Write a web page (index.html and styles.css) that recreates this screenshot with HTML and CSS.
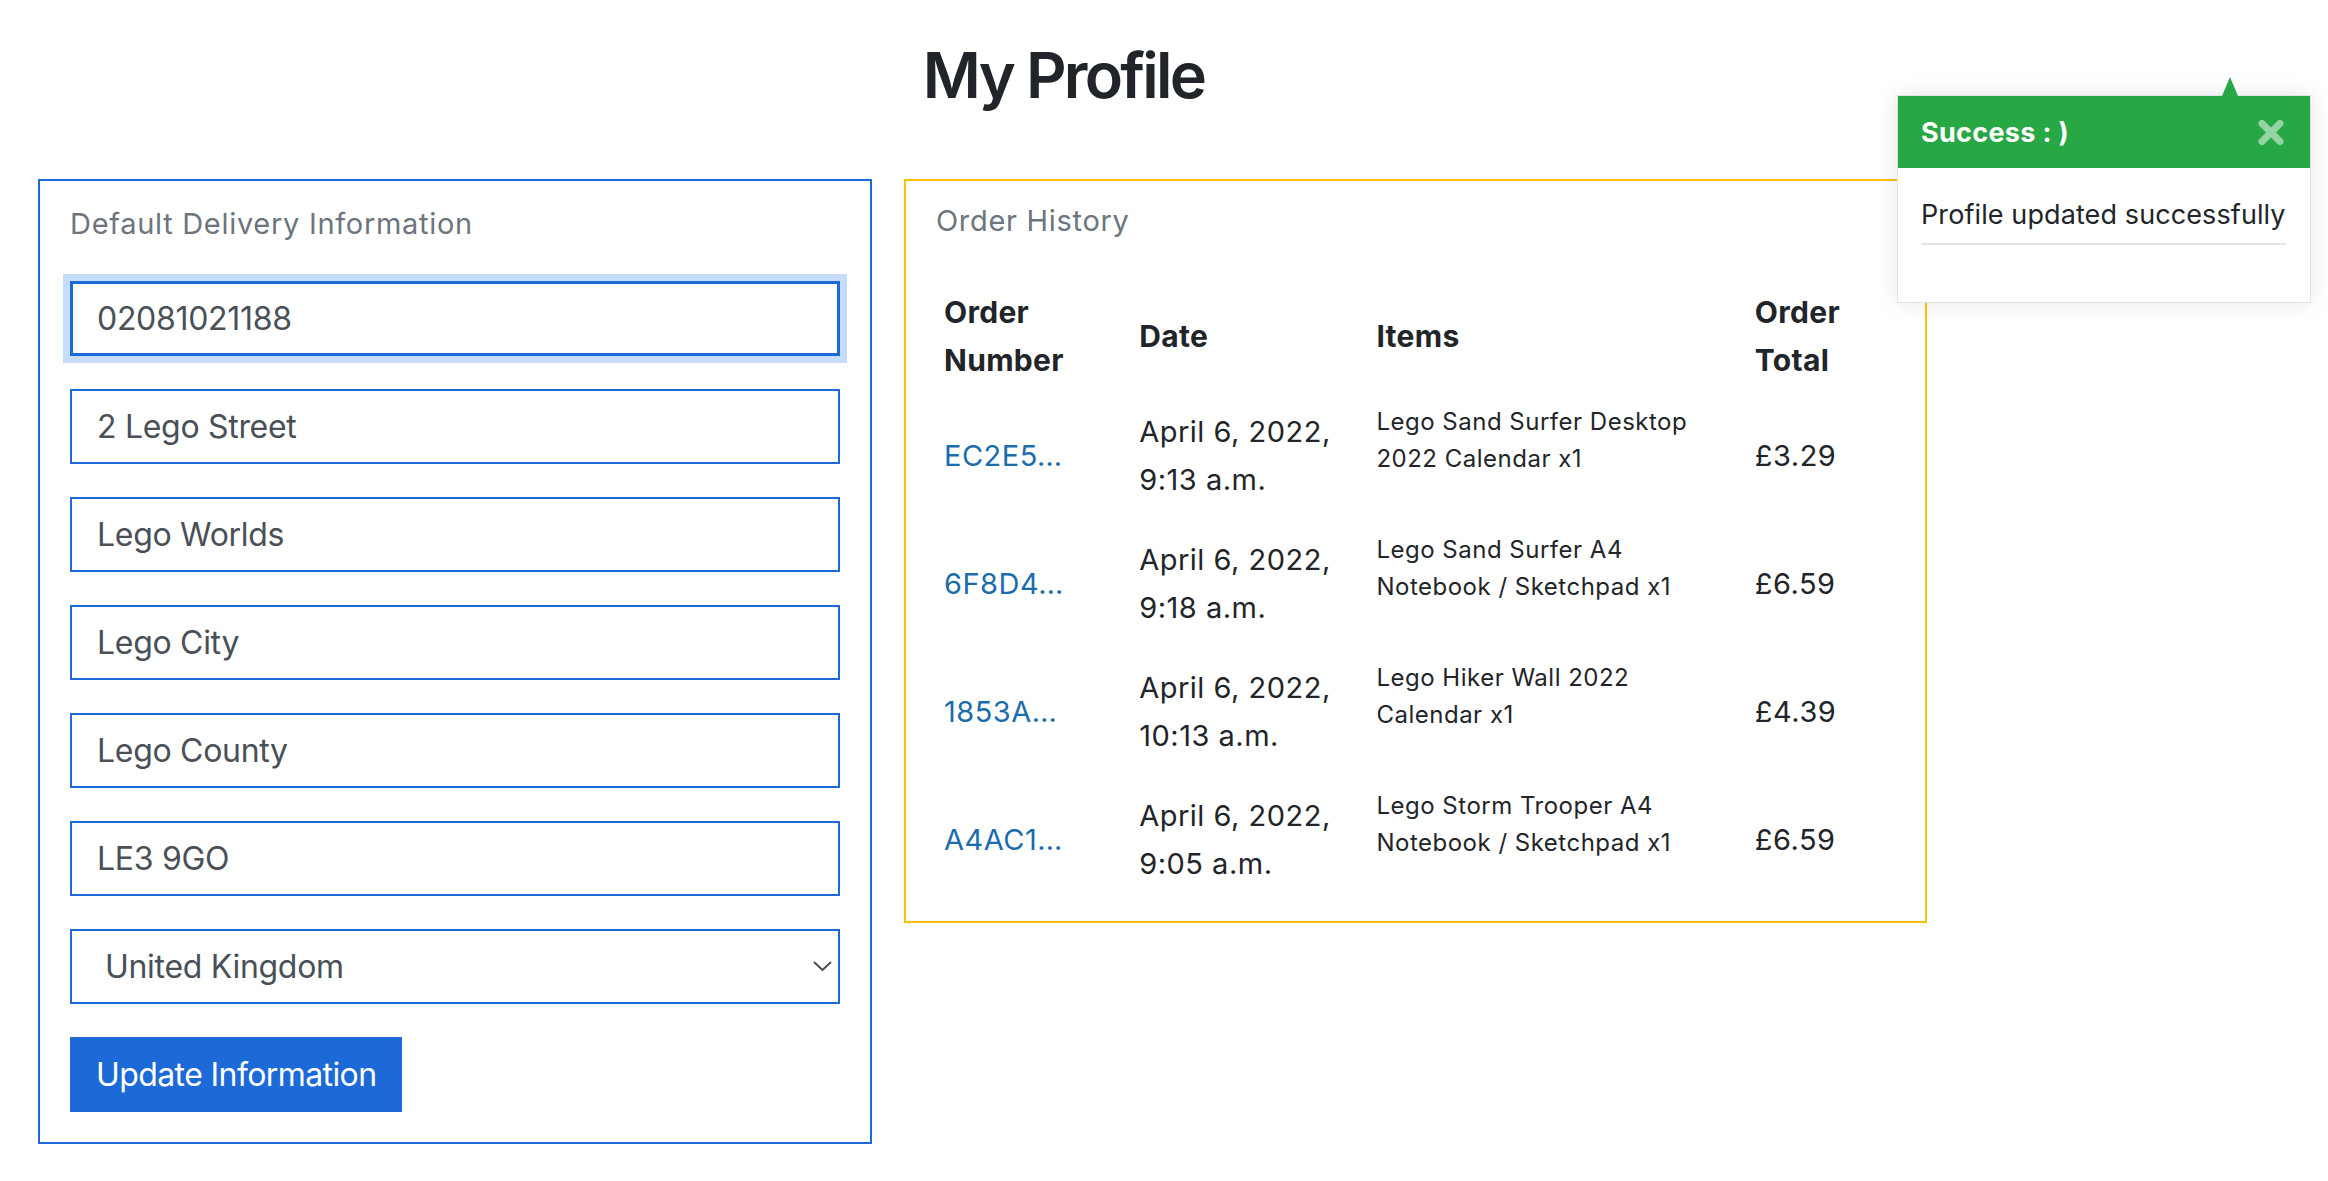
FILE: index.html
```html
<!DOCTYPE html>
<html lang="en">
<head>
<meta charset="utf-8">
<title>My Profile</title>
<link rel="stylesheet" href="styles.css">
</head>
<body>
<main class="page">
  <h1 class="page-title">My Profile</h1>
  <div class="cards">
    <section class="card card-delivery">
      <h2 class="card-title">Default Delivery Information</h2>
      <form class="delivery-form">
        <input class="field is-focused" type="text" value="02081021188">
        <input class="field" type="text" value="2 Lego Street">
        <input class="field" type="text" value="Lego Worlds">
        <input class="field" type="text" value="Lego City">
        <input class="field" type="text" value="Lego County">
        <input class="field" type="text" value="LE3 9GO">
        <div class="select-wrap">
          <select class="field field-select">
            <option selected>United Kingdom</option>
          </select>
          <svg class="chevron" viewBox="0 0 19 10" aria-hidden="true"><path d="M1 1l8.5 8L18 1"/></svg>
        </div>
        <button type="button" class="btn-update">Update Information</button>
      </form>
    </section>
    <section class="card card-orders">
      <h2 class="card-title">Order History</h2>
      <table class="orders">
        <colgroup>
          <col class="col-num">
          <col class="col-date">
          <col class="col-items">
          <col class="col-total">
        </colgroup>
        <thead>
          <tr>
            <th>Order Number</th>
            <th>Date</th>
            <th>Items</th>
            <th>Order Total</th>
          </tr>
        </thead>
        <tbody>
          <tr>
            <td><a class="order-link" href="#">EC2E5…</a></td>
            <td>April 6, 2022, 9:13 a.m.</td>
            <td class="item-cell"><p>Lego Sand Surfer Desktop<br>2022 Calendar x1</p></td>
            <td>£3.29</td>
          </tr>
          <tr>
            <td><a class="order-link" href="#">6F8D4…</a></td>
            <td>April 6, 2022, 9:18 a.m.</td>
            <td class="item-cell"><p>Lego Sand Surfer A4<br>Notebook / Sketchpad x1</p></td>
            <td>£6.59</td>
          </tr>
          <tr>
            <td><a class="order-link" href="#">1853A…</a></td>
            <td>April 6, 2022, 10:13 a.m.</td>
            <td class="item-cell"><p>Lego Hiker Wall 2022<br>Calendar x1</p></td>
            <td>£4.39</td>
          </tr>
          <tr>
            <td><a class="order-link" href="#">A4AC1…</a></td>
            <td>April 6, 2022, 9:05 a.m.</td>
            <td class="item-cell"><p>Lego Storm Trooper A4<br>Notebook / Sketchpad x1</p></td>
            <td>£6.59</td>
          </tr>
        </tbody>
      </table>
    </section>
  </div>
</main>

<div class="toast" role="status">
  <span class="toast-arrow"></span>
  <div class="toast-header">
    <strong class="toast-title">Success : )</strong>
    <svg class="toast-close" viewBox="0 0 26 26" aria-hidden="true"><path d="M4 4L22 22M22 4L4 22"/></svg>
  </div>
  <div class="toast-body">
    <p>Profile updated successfully</p>
    <hr>
  </div>
</div>
</body>
</html>
```

FILE: styles.css
```css
* {
  box-sizing: border-box;
}

body {
  margin: 0;
  background: #fff;
  color: #212529;
  font-family: Inter, "Noto Sans", "Liberation Sans", sans-serif;
}

.page {
  width: 2089px;
  padding: 37px 0 0 38px;
}

.page-title {
  margin: 0 0 65px;
  text-align: center;
  font-size: 63px;
  line-height: 77px;
  font-weight: 600;
  letter-spacing: -2.8px;
}

.cards {
  display: flex;
  align-items: flex-start;
  gap: 32px;
}

.card {
  border: 2px solid;
  background: #fff;
}

.card-delivery {
  width: 834px;
  border-color: #1c6ad8;
  padding: 25px 30px 30px;
}

.card-orders {
  width: 1023px;
  border-color: #ffc107;
  padding: 22px 30px 17px;
}

.card-title {
  margin: 0;
  font-size: 29px;
  line-height: 35px;
  font-weight: 400;
  letter-spacing: 0.7px;
  color: #6c757d;
}

.card-delivery .card-title {
  margin-bottom: 40px;
}

.card-orders .card-title {
  margin-bottom: 42px;
}

.delivery-form {
  display: flex;
  flex-direction: column;
  gap: 33px;
}

.field {
  display: block;
  width: 100%;
  height: 75px;
  margin: 0;
  padding: 0 25px;
  border: 2px solid #1c6ad8;
  border-radius: 0;
  background: #fff;
  font-family: inherit;
  font-size: 32px;
  letter-spacing: -0.3px;
  color: #495057;
  outline: none;
}

.field.is-focused {
  box-shadow: inset 0 0 0 1px #1c6ad8, 0 0 0 7px #c5dcfa;
}

.select-wrap {
  position: relative;
}

.field-select {
  appearance: none;
  -webkit-appearance: none;
  padding: 0 60px 0 33px;
}

.chevron {
  position: absolute;
  right: 8px;
  top: 32px;
  width: 19px;
  height: 10px;
  fill: none;
  stroke: #4a4f55;
  stroke-width: 2;
  pointer-events: none;
}

.btn-update {
  align-self: flex-start;
  height: 75px;
  padding: 0 26px;
  border: 0;
  border-radius: 0;
  background: #1c6ad8;
  color: #fff;
  font-family: inherit;
  font-size: 32px;
  letter-spacing: -0.6px;
}

.orders {
  width: 100%;
  border-collapse: collapse;
  table-layout: fixed;
}

.col-num { width: 195px; }
.col-date { width: 237px; }
.col-items { width: 378px; }
.col-total { width: 148px; }

.orders th {
  padding: 8px;
  text-align: left;
  vertical-align: middle;
  font-size: 30px;
  line-height: 48px;
  font-weight: 700;
  letter-spacing: 0.3px;
}

.orders td {
  padding: 11px 8px;
  vertical-align: middle;
  font-size: 29px;
  line-height: 48px;
  letter-spacing: 0.5px;
}

.orders .item-cell p {
  margin: 0 0 32px;
  font-size: 24px;
  line-height: 37px;
  letter-spacing: 0.5px;
}

.order-link {
  color: #1b6cab;
  text-decoration: none;
}

.toast {
  position: absolute;
  left: 1897px;
  top: 95px;
  width: 414px;
  background: #fff;
  border: 1px solid #e3e3e3;
  box-shadow: 0 0 22px rgba(0, 0, 0, 0.1);
}

.toast-arrow {
  position: absolute;
  top: -19px;
  left: 324px;
  width: 0;
  height: 0;
  border-left: 8px solid transparent;
  border-right: 8px solid transparent;
  border-bottom: 19px solid #28a745;
}

.toast-header {
  display: flex;
  align-items: center;
  justify-content: space-between;
  height: 72px;
  padding: 0 26px 0 23px;
  background: #28a745;
  color: #fff;
}

.toast-title {
  font-size: 27px;
  font-weight: 700;
  letter-spacing: 0.3px;
}

.toast-close {
  width: 26px;
  height: 27px;
  fill: none;
  stroke: rgba(255, 255, 255, 0.5);
  stroke-width: 7;
  stroke-linecap: round;
}

.toast-body {
  height: 134px;
  padding: 27px 24px 0 23px;
}

.toast-body p {
  margin: 0;
  font-size: 27px;
  line-height: 40px;
  letter-spacing: 0.1px;
}

.toast-body hr {
  margin: 8px 0 0;
  border: 0;
  border-top: 2px solid #e6e6e6;
}
```
